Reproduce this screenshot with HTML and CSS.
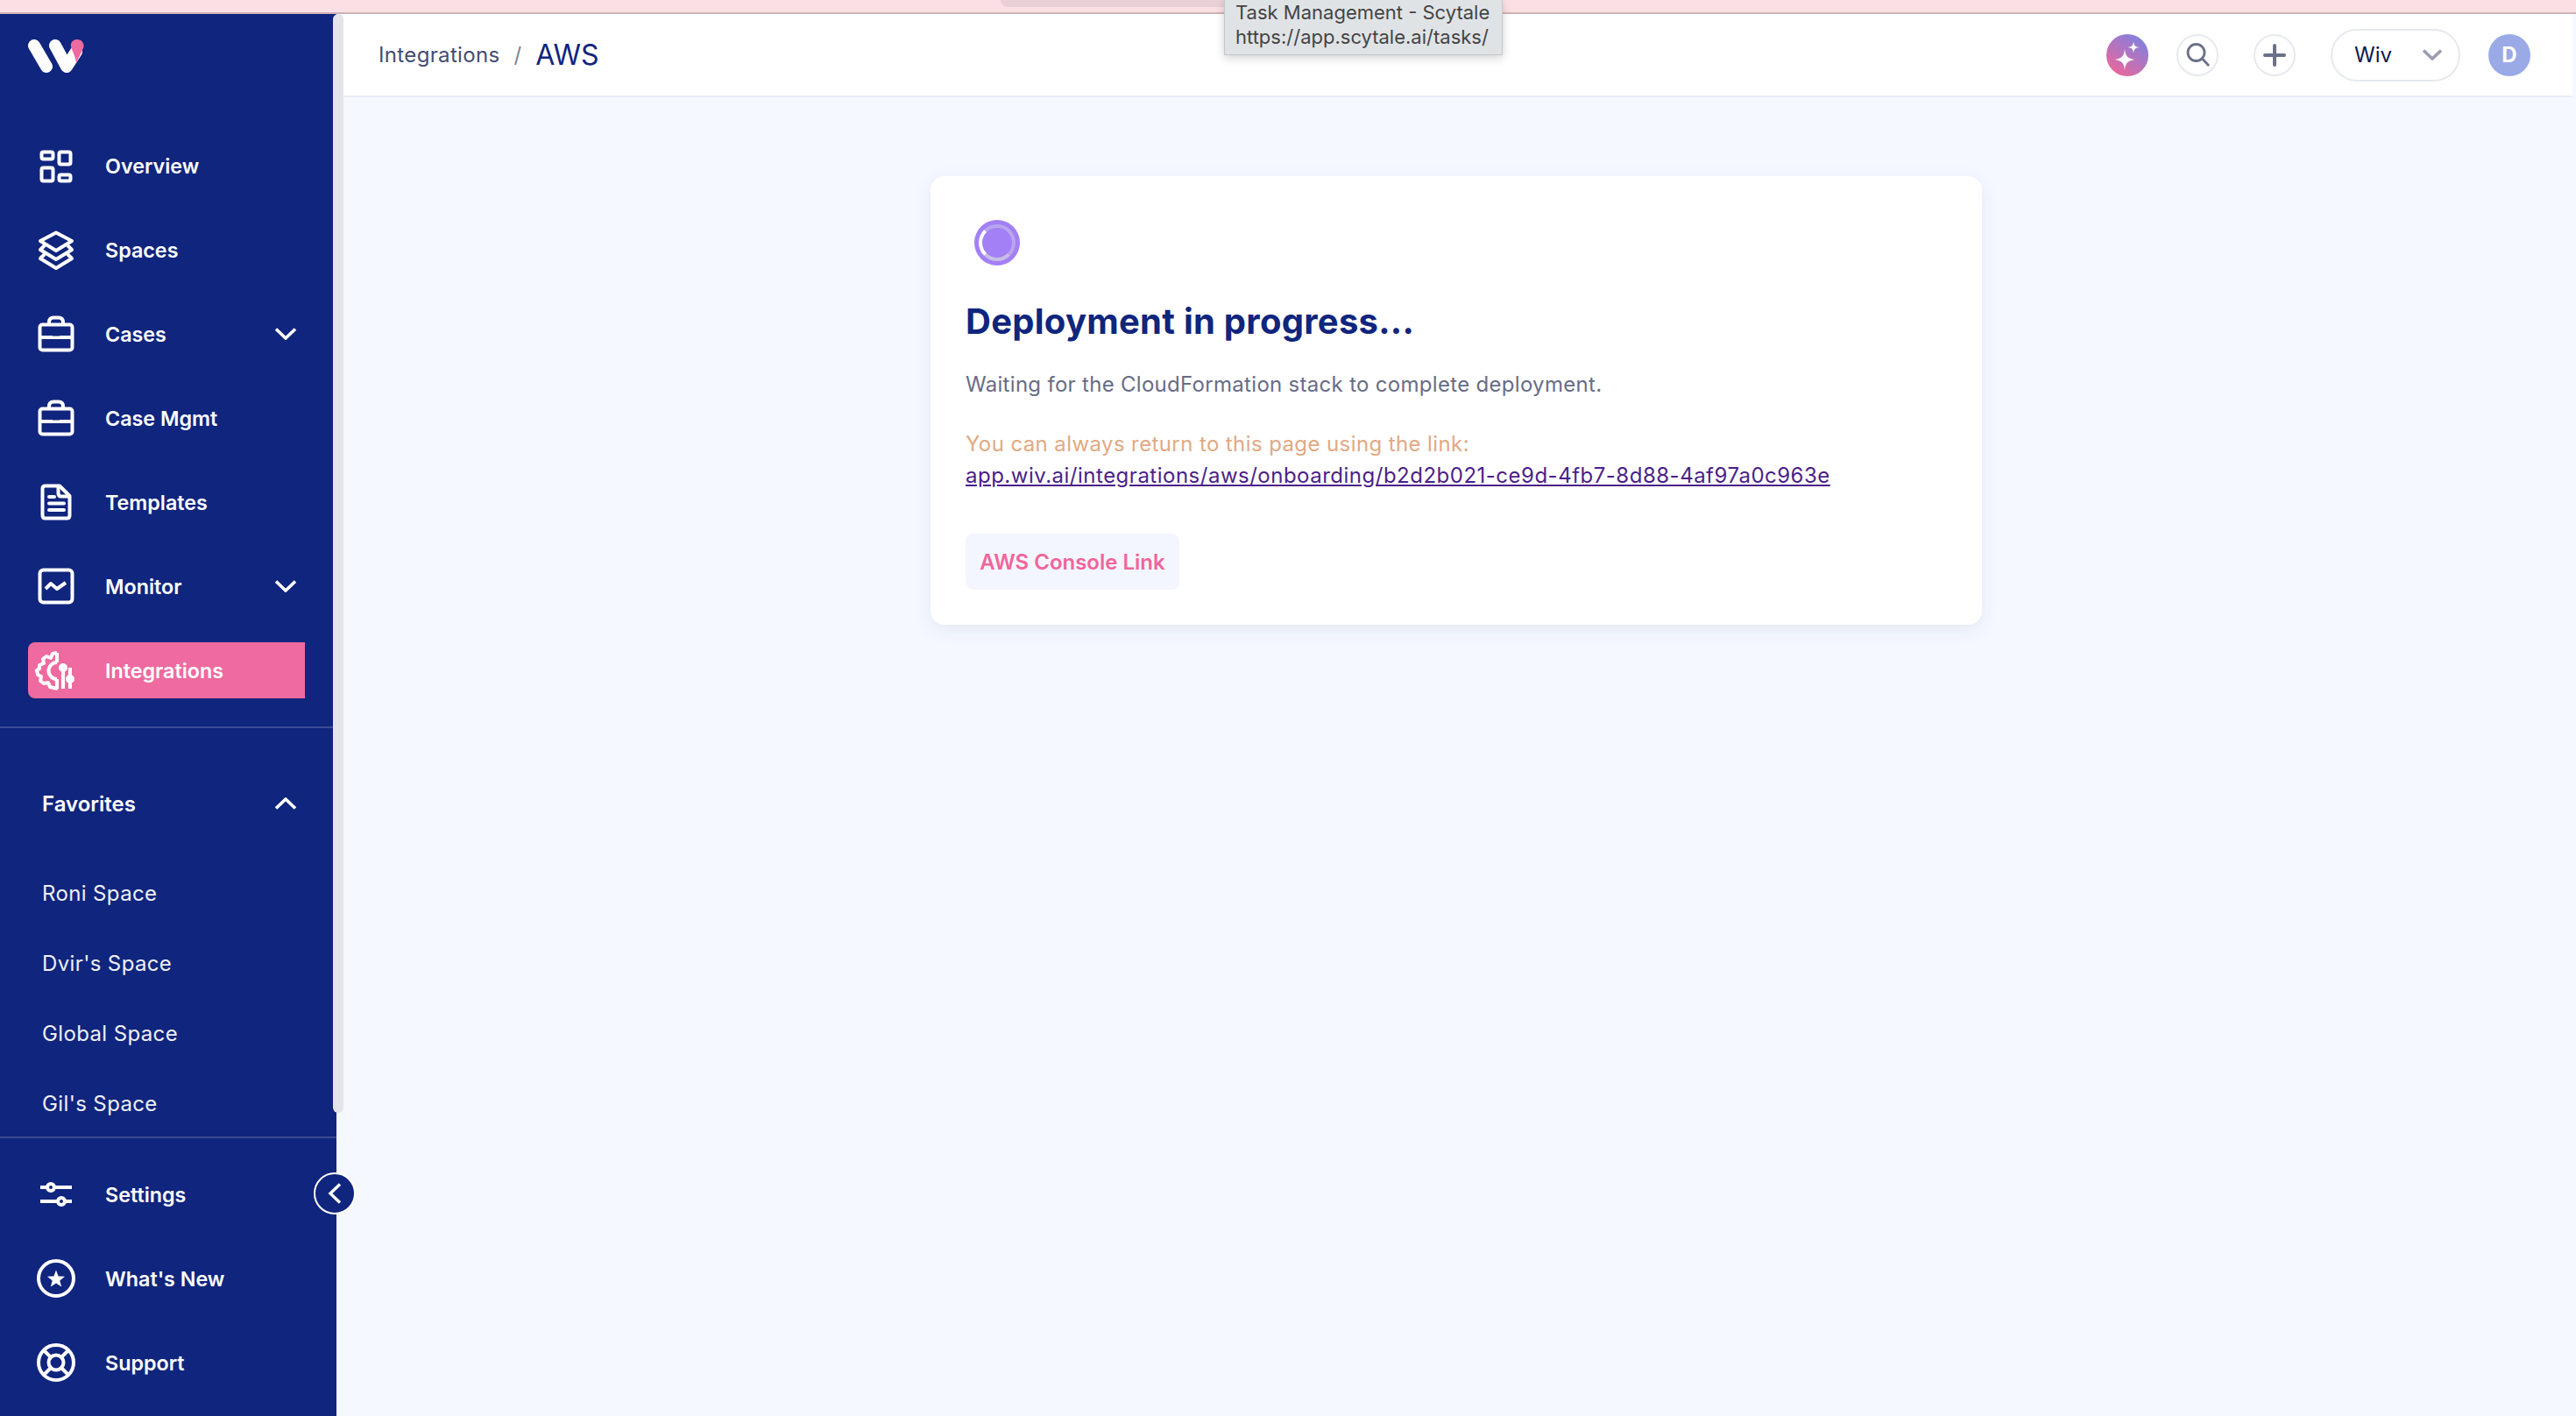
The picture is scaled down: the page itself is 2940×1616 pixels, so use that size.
FILE: index.html
```html
<!DOCTYPE html>
<html lang="en">
<head>
<meta charset="utf-8">
<title>AWS - Integrations</title>
<link rel="stylesheet" href="styles.css">
</head>
<body>
<div class="topstrip"><div class="tab"></div></div>
<div class="tooltip"><div>Task Management - Scytale</div><div>https://app.scytale.ai/tasks/</div></div>
<div class="shell">
  <aside class="sidebar">
    <div class="scrollbar"></div>
    <div class="side-top">
      <svg class="logo" width="64" height="40" viewBox="0 0 64 40"><g fill="none" stroke="#fff" stroke-width="14" stroke-linecap="round" stroke-linejoin="round"><path d="M7 7 L21 31"/><path d="M31 7 L44 31 L55 14"/></g><path d="M56 0 C62 0 65 6 63 10 C61 15 58 20 55 27 C54 18 50 13 49 8 C48 3 52 0 56 0Z" fill="#ee6a9f"/></svg>
      <nav class="nav">
        <a class="item"><svg class="ic" viewBox="0 0 40 40" fill="none" stroke="#fff" stroke-width="3"><rect x="3.500" y="4.500" width="13" height="8" rx="2"/><rect x="23.500" y="4.500" width="13" height="14" rx="2"/><rect x="3.500" y="22.500" width="13" height="15" rx="2"/><rect x="23.500" y="30.500" width="13" height="7" rx="2"/></svg><span>Overview</span></a>
        <a class="item"><svg class="ic" viewBox="0 0 40 40" fill="none" stroke="#fff" stroke-width="3" stroke-linejoin="round"><path d="M20 0.500 L38 10 L20 21 L2 10Z"/><path d="M7 15 L2 20 L20 31 L38 20 L33 15"/><path d="M7 25 L2 30 L20 41 L38 30 L33 25"/></svg><span>Spaces</span></a>
        <a class="item"><svg class="ic" viewBox="0 0 40 40" fill="none" stroke="#fff" stroke-width="3"><rect x="1.500" y="9.500" width="37" height="29" rx="3"/><path d="M1.500 24 H16 M24 24 H38.500"/><rect x="15" y="22.500" width="10" height="3.500" rx="1.700" fill="#fff" stroke="none"/><path d="M12 9 V7 C12 3 14 1.500 17 1.500 H23 C26 1.500 28 3 28 7 V9"/></svg><span>Cases</span><svg class="chev" viewBox="0 0 24 14" fill="none" stroke="#fff" stroke-width="3.600"><path d="M1 1.500 L12 12 L23 1.500"/></svg></a>
        <a class="item"><svg class="ic" viewBox="0 0 40 40" fill="none" stroke="#fff" stroke-width="3"><rect x="1.500" y="9.500" width="37" height="29" rx="3"/><path d="M1.500 24 H16 M24 24 H38.500"/><rect x="15" y="22.500" width="10" height="3.500" rx="1.700" fill="#fff" stroke="none"/><path d="M12 9 V7 C12 3 14 1.500 17 1.500 H23 C26 1.500 28 3 28 7 V9"/></svg><span>Case Mgmt</span></a>
        <a class="item"><svg class="ic" viewBox="0 0 40 40" fill="none" stroke="#fff" stroke-width="3" stroke-linejoin="round"><path d="M8 1.500 H24 L35.500 13 V35 C35.500 37 34.500 38.500 32.500 38.500 H7.500 C5.500 38.500 4.500 37 4.500 35 V4.500 C4.500 2.500 6 1.500 8 1.500Z"/><path d="M22.500 2 V10 C22.500 12 23.500 13.500 26 13.500 H35"/><path d="M12 14 H18 M12 21.500 H29 M12 29 H29" stroke-linecap="round"/></svg><span>Templates</span></a>
        <a class="item"><svg class="ic" viewBox="0 0 40 40" fill="none" stroke="#fff" stroke-width="3"><rect x="1.500" y="1.500" width="37" height="37" rx="4"/><path d="M8 23 L14 17 L21 23 L31 16" stroke-linejoin="round"/></svg><span>Monitor</span><svg class="chev" viewBox="0 0 24 14" fill="none" stroke="#fff" stroke-width="3.600"><path d="M1 1.500 L12 12 L23 1.500"/></svg></a>
        <a class="item active"><svg class="ic ic-int" viewBox="0 0 44 44" fill="none" stroke="#fff" stroke-width="3" stroke-linejoin="round"><path d="M25 2 L20 3 L18 8 L13 6 L9 9 L10 14 L5 16 L5 20 L2 22 L3 27 L7 29 L6 34 L10 37 L15 36 L17 41 L26 43"/><path d="M25 13 A9 9 0 0 0 25 32"/><path d="M25 2 V13 M25 32 V43"/><circle cx="32" cy="19" r="3" fill="#fff"/><path d="M32 22 V43 M40 19 V43"/><circle cx="40" cy="32" r="3" fill="#fff"/></svg><span>Integrations</span></a>
      </nav>
      <div class="favorites">
        <div class="fav-head"><span>Favorites</span><svg class="chev" viewBox="0 0 24 14" fill="none" stroke="#fff" stroke-width="3.600"><path d="M1 12.500 L12 2 L23 12.500"/></svg></div>
        <a class="fav">Roni Space</a>
        <a class="fav">Dvir's Space</a>
        <a class="fav">Global Space</a>
        <a class="fav">Gil's Space</a>
      </div>
    </div>
    <div class="side-bottom">
      <button class="collapse"><svg width="16" height="24" viewBox="0 0 16 24" fill="none" stroke="#fff" stroke-width="3.400"><path d="M14 1.500 L3 12 L14 22.500"/></svg></button>
      <a class="item"><svg class="ic" viewBox="0 0 40 40" fill="none" stroke="#fff" stroke-width="3.500"><path d="M2 12 H38 M2 28 H38"/><circle cx="14" cy="12" r="4" fill="#10257d"/><circle cx="26" cy="28" r="4" fill="#10257d"/></svg><span>Settings</span></a>
      <a class="item"><svg class="ic ic-lg" viewBox="0 0 44 44" fill="none" stroke="#fff" stroke-width="3.500"><circle cx="22" cy="22" r="20"/><path d="M22 12.500 L24.600 19.400 L32 19.700 L26.300 24.400 L28.200 31.500 L22 27.500 L15.800 31.500 L17.700 24.400 L12 19.700 L19.400 19.400Z" fill="#fff" stroke="none"/></svg><span>What's New</span></a>
      <a class="item"><svg class="ic ic-lg" viewBox="0 0 44 44" fill="none" stroke="#fff" stroke-width="3.500"><circle cx="22" cy="22" r="20"/><circle cx="22" cy="22" r="8.500"/><path d="M8 8 L16 16 M36 8 L28 16 M8 36 L16 28 M36 36 L28 28"/></svg><span>Support</span></a>
    </div>
  </aside>
  <div class="main">
    <header class="header">
      <div class="crumbs"><span class="crumb">Integrations</span><span class="sep">/</span><span class="current">AWS</span></div>
      <div class="actions">
        <button class="round ai"><svg width="48" height="48" viewBox="0 0 48 48" fill="#fff"><path d="M21 17 C22 25 23.500 27 32 29 C23.500 31 22 33 21 41 C20 33 18.500 31 10 29 C18.500 27 20 25 21 17Z"/><path d="M31 8 C31.500 13 33 14.500 38 15 C33 15.500 31.500 17 31 22 C30.500 17 29 15.500 24 15 C29 14.500 30.500 13 31 8Z"/></svg></button>
        <button class="round"><svg width="30" height="30" viewBox="0 0 30 30" fill="none" stroke="#6b7089" stroke-width="2.800"><circle cx="13.500" cy="12" r="9.500"/><path d="M20.500 19 L28 27"/></svg></button>
        <button class="round"><svg width="26" height="26" viewBox="0 0 26 26" fill="none" stroke="#6b7089" stroke-width="4" stroke-linecap="round"><path d="M13 2 V24 M2 13 H24"/></svg></button>
        <div class="select"><span>Wiv</span><svg width="22" height="13" viewBox="0 0 22 13" fill="none" stroke="#9a9daf" stroke-width="3.500"><path d="M1 1.500 L11 11 L21 1.500"/></svg></div>
        <div class="avatar">D</div>
      </div>
    </header>
    <main class="content">
      <section class="card">
        <div class="spinner"></div>
        <h1 class="title">Deployment in progress...</h1>
        <p class="desc">Waiting for the CloudFormation stack to complete deployment.</p>
        <p class="note">You can always return to this page using the link:</p>
        <a class="link">app.wiv.ai/integrations/aws/onboarding/b2d2b021-ce9d-4fb7-8d88-4af97a0c963e</a>
        <button class="console">AWS Console Link</button>
      </section>
    </main>
  </div>
</div>
</body>
</html>
```
FILE: styles.css
```css
* { box-sizing: border-box; }
html, body { margin: 0; height: 100%; }
body { width: 2940px; height: 1616px; overflow: hidden; font-family: Inter, "Liberation Sans", sans-serif; background: #f5f8ff; position: relative; }
a { display: flex; text-decoration: none; color: inherit; }
button { font-family: inherit; border: 0; padding: 0; background: none; }

.topstrip { height: 16px; background: #fae0e4; border-bottom: 2px solid #d0b3b9; position: relative; }
.tab { position: absolute; left: 1142px; top: 0; width: 270px; height: 8px; background: #e8d0d6; border-bottom-left-radius: 10px; }
.tooltip { position: absolute; left: 1397px; top: 0; width: 318px; height: 63px; background: #e0e3e6; border: 1px solid #c4c6c9; border-top: 0; box-shadow: 0 3px 10px rgba(0,0,0,.18); color: #444; font-size: 22px; line-height: 28px; padding: 0 0 0 12px; z-index: 5; white-space: nowrap; }

.shell { display: flex; height: 1600px; }
.sidebar { width: 384px; flex: none; background: #10257d; color: #fff; position: relative; display: flex; flex-direction: column; }
.scrollbar { position: absolute; left: 380px; top: 0; width: 12px; height: 1254px; background: #e4e5ea; border-radius: 6px; }
.side-top { height: 1283px; padding-top: 29px; border-bottom: 2px solid #3a4c93; }
.logo { display: block; margin-left: 32px; }
.nav { margin-top: 72px; padding-bottom: 32px; border-bottom: 2px solid #3a4c93; width: 380px; display: flex; flex-direction: column; }

.item { height: 64px; margin: 0 32px 32px 32px; align-items: center; font-size: 23.300px; font-weight: 600; padding-right: 10px; flex: none; }
.item span { flex: 1; }
.ic { width: 40px; height: 40px; margin: 0 36px 0 12px; flex: none; overflow: visible; stroke-width: 4; }
.ic-lg { width: 44px; height: 44px; margin: 0 34px 0 10px; stroke-width: 4; }
.ic-int { width: 44px; height: 44px; margin: 0 36px 0 8px; stroke-width: 4; }
.chev { width: 24px; height: 14px; flex: none; }
.item.active { background: #ee6a9f; border-radius: 8px 0 0 8px; margin-bottom: 0; padding-right: 0; }

.favorites { width: 380px; padding: 0 32px 0 48px; }
.fav-head { height: 64px; margin-top: 54px; margin-bottom: 30px; display: flex; align-items: center; justify-content: space-between; font-size: 24px; font-weight: 600; padding-right: 10px; }
.fav { height: 80px; align-items: center; font-size: 24px; font-weight: 400; letter-spacing: .37px; color: #eef0f8; }

.side-bottom { position: relative; padding-top: 32px; display: flex; flex-direction: column; }
.collapse { position: absolute; left: 358px; top: 39px; width: 48px; height: 48px; border-radius: 50%; background: #10257d; border: 2px solid #fff; display: flex; align-items: center; justify-content: center; z-index: 3; }

.main { flex: 1; margin: 0 4px 0 8px; min-width: 0; display: flex; flex-direction: column; }
.header { height: 95px; flex: none; background: #fff; border-bottom: 2px solid #e9edf8; display: flex; align-items: center; justify-content: space-between; padding: 0 48px 0 40px; }
.crumbs { display: flex; align-items: center; }
.crumb { font-size: 24px; letter-spacing: .35px; color: #444c72; }
.sep { font-size: 24px; color: #7d8199; margin: 0 16px; }
.current { font-size: 32px; color: #10257d; }
.actions { display: flex; align-items: center; }
.round { width: 48px; height: 48px; border-radius: 50%; border: 2px solid #e7e9f0; background: #fff; display: flex; align-items: center; justify-content: center; margin-right: 40px; }
.round.ai { border: 0; background: linear-gradient(215deg, #7f80e0 10%, #e5689f 85%); margin-right: 32px; }
.select { width: 148px; height: 60px; border: 2px solid #e7e9f0; border-radius: 30px; display: flex; align-items: center; justify-content: space-between; padding: 0 19px 0 25px; font-size: 24px; color: #0e1a4d; margin-right: 32px; }
.avatar { width: 48px; height: 48px; border-radius: 50%; background: #9aaae6; color: #fff; font-size: 24px; font-weight: 700; display: flex; align-items: center; justify-content: center; }

.content { flex: 1; display: flex; justify-content: center; align-items: flex-start; padding-top: 90px; }
.card { margin-right: 4px; width: 1200px; height: 512px; background: #fff; border-radius: 16px; box-shadow: 0 6px 22px rgba(30,50,110,.08); padding: 50px 40px 0; display: flex; flex-direction: column; align-items: flex-start; }
.spinner { width: 52px; height: 52px; margin-left: 10px; border-radius: 50%; background: #a380f5; position: relative; }
.spinner::after { content: ""; position: absolute; inset: 5px; border-radius: 50%; border: 4px solid #b9a6ee; border-bottom-color: #c8c0e4; border-left-color: #fff; background: #a380f5; }
.title { margin: 40px 0 0; font-size: 40px; line-height: 48px; font-weight: 700; letter-spacing: .26px; color: #10257d; }
.desc { margin: 30px 0 0; font-size: 24px; line-height: 36px; letter-spacing: .3px; color: #686c86; }
.note { margin: 32px 0 0; font-size: 24px; line-height: 36px; letter-spacing: .4px; color: #e2a983; }
.link { font-size: 24px; line-height: 36px; letter-spacing: .5px; color: #4b1f8a; text-decoration: underline; }
.console { margin-top: 48px; width: 244px; height: 64px; background: #f3f6fe; border-radius: 8px; color: #f0659b; font-size: 24px; font-weight: 600; }
```
